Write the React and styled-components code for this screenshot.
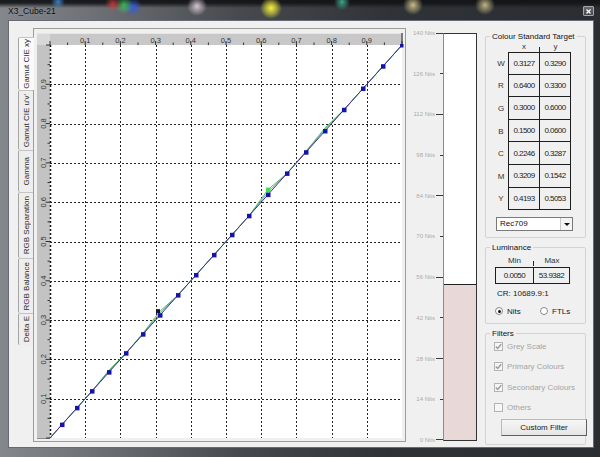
import React from 'react';
import styled, { createGlobalStyle } from 'styled-components';

const GlobalStyle = createGlobalStyle`
  html, body { margin: 0; padding: 0; background: #16181b; }
  body { font-family: "Liberation Sans", Arial, sans-serif; }
  * { box-sizing: border-box; }
`;

const Window = styled.div`
  width: 600px;
  height: 457px;
  display: flex;
  flex-direction: column;
  overflow: hidden;
  background:
    radial-gradient(circle at 58px 2px, rgba(70,150,230,0.8) 0, rgba(70,150,230,0) 7px),
    radial-gradient(circle at 113px 4px, rgba(220,60,60,0.8) 0, rgba(220,60,60,0) 8px),
    radial-gradient(circle at 124px 5px, rgba(60,200,90,0.85) 0, rgba(60,200,90,0) 9px),
    radial-gradient(circle at 133px 7px, rgba(50,90,230,0.9) 0, rgba(50,90,230,0) 9px),
    radial-gradient(circle at 197px 6px, rgba(240,220,235,0.85) 0, rgba(240,220,235,0) 10px),
    radial-gradient(circle at 271px 8px, rgba(245,240,60,1) 0, rgba(245,240,60,0.6) 5px, rgba(245,240,60,0) 11px),
    radial-gradient(circle at 342px 2px, rgba(70,200,170,0.8) 0, rgba(70,200,170,0) 8px),
    radial-gradient(circle at 413px 5px, rgba(230,215,150,0.85) 0, rgba(230,215,150,0) 10px),
    radial-gradient(circle at 485px 5px, rgba(230,215,150,0.8) 0, rgba(230,215,150,0) 10px),
    linear-gradient(to bottom, rgba(18,20,23,0.95) 0, rgba(18,20,23,0.9) 3px, rgba(18,20,23,0) 8px),
    linear-gradient(to right, #84878c 0, #6e7176 15%, #46494d 40%, #2f3236 65%, #2a2d31 100%);
`;

const TitleBar = styled.div`
  height: 20px;
  flex: none;
  display: flex;
  align-items: center;
  justify-content: space-between;
  padding: 2px 6px 0 8px;
`;

const Title = styled.span`
  font-size: 8.5px;
  color: #0e0e0e;
  text-shadow: 0 0 3px rgba(200, 200, 200, 0.35);
`;

const CloseBox = styled.div`
  width: 11px;
  height: 10px;
  display: flex;
  align-items: center;
  justify-content: center;
  border: 1px solid #a3a8ad;
  border-radius: 1px;
  background: linear-gradient(#666b70, #44484c);
`;

const Client = styled.div`
  flex: 1;
  margin: 0 6px 9px 8px;
  display: flex;
  align-items: flex-start;
  padding: 7px 0 0 9px;
  background: #f0f0f0;
  border: 1px solid #666b71;
`;

const TabControl = styled.div`
  width: 388px;
  height: 414px;
  display: flex;
  flex: none;
`;

const TabStrip = styled.div`
  width: 15px;
  display: flex;
  flex-direction: column;
  padding-top: 9px;
`;

const Tab = styled.div`
  width: ${p => (p.$active ? 16 : 15)}px;
  height: ${p => p.$len}px;
  margin-right: ${p => (p.$active ? -1 : 0)}px;
  position: relative;
  z-index: ${p => (p.$active ? 1 : 0)};
  display: flex;
  align-items: center;
  justify-content: center;
  background: ${p => (p.$active ? '#fafafa' : '#eeeeee')};
  border-left: 1px solid #a4a4a4;
  border-top: 1px solid #c4c4c4;
  border-top-left-radius: 2px;
  border-bottom-left-radius: 2px;
`;

const TabLabel = styled.span`
  writing-mode: vertical-rl;
  transform: rotate(180deg);
  white-space: nowrap;
  font-size: 8px;
  color: #2a2a2a;
`;

const Panel = styled.div`
  flex: 1;
  padding: 4px 0 0 3px;
  background: #f0f0f0;
  border: 1px solid #9c9c9c;
`;

const ChartSvg = styled.svg`
  display: block;
  font-family: "Liberation Sans", Arial, sans-serif;
`;

const NitsArea = styled.div`
  width: 74px;
  flex: none;
  display: flex;
  align-items: flex-start;
`;

const Scale = styled.div`
  width: 37px;
  height: 415px;
  margin-top: 1px;
  display: flex;
  flex-direction: column;
  justify-content: space-between;
  align-items: flex-end;
`;

const ScaleLabel = styled.div`
  height: 8px;
  display: flex;
  align-items: center;
  font-size: 6px;
  color: #ababab;
  white-space: nowrap;
`;

const TickSlot = styled.div`
  width: 8px;
  display: flex;
  justify-content: flex-end;
`;

const Tick = styled.div`
  width: ${p => (p.$long ? 7 : 3)}px;
  height: 1px;
  background: #3a3a3a;
`;

const Bar = styled.div`
  width: 34px;
  height: 408px;
  margin-top: 5px;
  display: flex;
  flex-direction: column;
  justify-content: flex-end;
  background: #ffffff;
  border: 1px solid #333333;
  border-left-color: #8c8c8c;
`;

const BarFill = styled.div`
  background: #e8d8d8;
  border-top: 1px solid #222222;
`;

const RightPanel = styled.div`
  width: 101px;
  flex: none;
  margin-left: 5px;
  display: flex;
  flex-direction: column;
`;

const GroupBox = styled.div`
  position: relative;
  height: ${p => p.$h}px;
  margin-top: ${p => p.$mt}px;
  padding: ${p => p.$pad};
  border: 1px solid #d3d3d3;
  border-radius: 2px;
`;

const GroupTitle = styled.span`
  position: absolute;
  top: -5px;
  left: 4px;
  padding: 0 2px;
  line-height: 9px;
  font-size: 8px;
  color: #111111;
  background: #f0f0f0;
`;

const StdGrid = styled.div`
  display: grid;
  grid-template-columns: 14px 32px 31px;
`;

const HeadCell = styled.div`
  position: relative;
  height: 10px;
  line-height: 9px;
  text-align: center;
  font-size: 8px;
  color: #333333;
  &::after {
    content: '';
    display: ${p => (p.$divider ? 'block' : 'none')};
    position: absolute;
    right: 0;
    bottom: 0;
    width: 1px;
    height: 5px;
    background: #222222;
  }
`;

const RowLabel = styled.div`
  height: 22.6px;
  display: flex;
  align-items: center;
  justify-content: center;
  font-size: 8px;
  color: #333333;
`;

const ValueCell = styled.div`
  height: 22.6px;
  display: flex;
  align-items: center;
  justify-content: center;
  font-size: 8px;
  letter-spacing: -0.55px;
  color: #222222;
  border-right: 1px solid #1e1e1e;
  border-bottom: 1px solid #1e1e1e;
  border-top: ${p => (p.$top ? '1px solid #1e1e1e' : 'none')};
  border-left: ${p => (p.$left ? '1px solid #1e1e1e' : 'none')};
`;

const Select = styled.div`
  width: 77px;
  height: 14px;
  margin: 7px 0 0 2px;
  display: flex;
  align-items: stretch;
  background: #ffffff;
  border: 1px solid #7a7a7a;
`;

const SelectText = styled.span`
  flex: 1;
  padding-left: 3px;
  font-size: 8px;
  line-height: 12px;
  color: #111111;
`;

const SelectButton = styled.div`
  width: 12px;
  display: flex;
  align-items: center;
  justify-content: center;
  background: #f4f4f4;
  border-left: 1px solid #c8c8c8;
  &::before {
    content: '';
    border-left: 3px solid transparent;
    border-right: 3px solid transparent;
    border-top: 3px solid #111111;
  }
`;

const LumHead = styled.div`
  display: grid;
  grid-template-columns: 39px 36px;
  height: 11px;
`;

const LumBox = styled.div`
  display: grid;
  grid-template-columns: 38px 35px;
  width: 75px;
  height: 17px;
  border: 1px solid #1e1e1e;
`;

const LumCell = styled.div`
  display: flex;
  align-items: center;
  justify-content: center;
  font-size: 8px;
  letter-spacing: -0.5px;
  color: #222222;
  border-right: ${p => (p.$divider ? '1px solid #1e1e1e' : 'none')};
`;

const InfoLine = styled.div`
  height: 10px;
  margin: 5px 0 0 2px;
  line-height: 10px;
  font-size: 8px;
  color: #1a1a1a;
`;

const RadioRow = styled.div`
  display: grid;
  grid-template-columns: 45px 1fr;
  height: 10px;
  margin-top: 7px;
`;

const RadioItem = styled.div`
  display: flex;
  align-items: center;
  gap: 4px;
  font-size: 8px;
  color: #1a1a1a;
`;

const RadioDot = styled.span`
  width: 8px;
  height: 8px;
  border-radius: 50%;
  border: 1px solid #8a8a8a;
  background: #ffffff;
  display: flex;
  align-items: center;
  justify-content: center;
  &::after {
    content: '';
    width: 3px;
    height: 3px;
    border-radius: 50%;
    background: ${p => (p.$on ? '#111111' : 'transparent')};
  }
`;

const CheckRow = styled.div`
  height: 20.5px;
  display: flex;
  align-items: center;
  gap: 4px;
  font-size: 8px;
  color: #a4a4a4;
`;

const CheckBox = styled.span`
  width: 9px;
  height: 9px;
  display: flex;
  align-items: center;
  justify-content: center;
  border: 1px solid #b4b4b4;
  background: #f6f6f6;
`;

const Button = styled.div`
  width: 86px;
  height: 17px;
  margin: 1px 0 0 7px;
  display: flex;
  align-items: center;
  justify-content: center;
  font-size: 8px;
  color: #1a1a1a;
  background: linear-gradient(#f6f6f6, #e6e6e6);
  border: 1px solid #b9b9b9;
  border-right-color: #5e5e5e;
  border-bottom-color: #5e5e5e;
`;

const tabs = [
  { label: 'Gamut CIE xy', len: 53, active: true },
  { label: "Gamut CIE u'v'", len: 60 },
  { label: 'Gamma', len: 42 },
  { label: 'RGB Separation', len: 66 },
  { label: 'RGB Balance', len: 55 },
  { label: 'Delta E', len: 32 },
];

const targets = [
  ['W', '0.3127', '0.3290'],
  ['R', '0.6400', '0.3300'],
  ['G', '0.3000', '0.6000'],
  ['B', '0.1500', '0.0600'],
  ['C', '0.2246', '0.3287'],
  ['M', '0.3209', '0.1542'],
  ['Y', '0.4193', '0.5053'],
];

const filters = [
  { label: 'Grey Scale', on: true },
  { label: 'Primary Colours', on: true },
  { label: 'Secondary Colours', on: true },
  { label: 'Others', on: false },
];

const nits = [140, 126, 112, 98, 84, 70, 56, 42, 28, 14, 0];
const maxNits = 140;
const measured = 53.9382;

// plot area in page pixels
const X0 = 50, X1 = 402, Y0 = 438, Y1 = 45;
const px = v => X0 + v * (X1 - X0);
const py = v => Y0 - v * (Y0 - Y1);
const onDiag = x => Y0 - ((x - X0) * (Y0 - Y1)) / (X1 - X0);

const sampleX = [62, 77, 92, 109, 126, 143, 160, 178, 196, 214, 232, 249, 268, 287, 306, 325, 344, 363, 383];
const drift = { 109: -2, 143: -1, 160: -4, 268: -5, 306: -1, 325: -3 };

function GamutChart() {
  const steps = Array.from({ length: 21 }, (_, i) => i);
  const grid = Array.from({ length: 9 }, (_, i) => (i + 1) / 10);
  const pts = sampleX.map(x => [x, onDiag(x)]);
  const green = pts.map(([x, y]) => [x, y + (drift[x] || 0)]);
  const teal = pts.map(([x, y]) => [x, y + (drift[x] || 0) * 0.5]);
  const line = arr => [[X0, Y0], ...arr, [X1, Y1]].map(p => p.join(',')).join(' ');

  return (
    <ChartSvg width="368" height="408" viewBox="37 33 368 408">
      <rect x="37" y="33" width="366" height="12" fill="#c8c8c8" />
      <rect x="37" y="45" width="13" height="393" fill="#c3c3c3" />
      <rect x="37" y="33" width="13" height="12" fill="#d8d8d8" />
      <line x1="37" y1="33.5" x2="403" y2="33.5" stroke="#e6e6e6" />
      <rect x="401" y="33" width="2" height="12" fill="#7a7a7a" />
      <line x1="37" y1="438.5" x2="50" y2="438.5" stroke="#8a8a8a" />
      <rect x="50" y="45" width="352" height="393" fill="#ffffff" />

      {steps.map(i => {
        const x = X0 + i * 17.6;
        const major = i % 2 === 0;
        return <line key={'tx' + i} x1={x} y1={major ? 41 : 42.5} x2={x} y2="45" stroke="#333" />;
      })}
      {steps.map(i => {
        const y = Y0 - i * 19.65;
        const major = i % 2 === 0;
        return <line key={'ty' + i} x1={major ? 46 : 47.5} y1={y} x2="50" y2={y} stroke="#333" />;
      })}
      {grid.map(v => (
        <text key={'lx' + v} x={px(v)} y="42.5" fontSize="7.5" fill="#333" textAnchor="middle">
          {v.toFixed(1)}
        </text>
      ))}
      {grid.map(v => (
        <text
          key={'ly' + v}
          x="0"
          y="0"
          fontSize="7.5"
          fill="#333"
          textAnchor="middle"
          transform={`translate(46 ${py(v)}) rotate(-90)`}
        >
          {v.toFixed(1)}
        </text>
      ))}

      <line x1="50.5" y1="45" x2="50.5" y2="438" stroke="#111" strokeDasharray="2 2" strokeWidth="1.5" />
      {grid.map(v => (
        <line key={'gx' + v} x1={Math.round(px(v)) + 0.5} y1="45" x2={Math.round(px(v)) + 0.5} y2="438" stroke="#222" strokeDasharray="2 2" />
      ))}
      {grid.map(v => (
        <line key={'gy' + v} x1="50" y1={Math.round(py(v)) + 0.5} x2="402" y2={Math.round(py(v)) + 0.5} stroke="#222" strokeDasharray="2 2" />
      ))}

      <polyline points={line(green)} fill="none" stroke="#52c35a" strokeWidth="1" />
      <polyline points={line(teal)} fill="none" stroke="#3a9aa8" strokeWidth="1" opacity="0.8" />
      <line x1={X0} y1={Y0} x2={X1} y2={Y1} stroke="#4a2b86" strokeWidth="1" />

      {pts.map(([x, y]) => (
        <rect key={'p' + x} x={x - 2} y={y - 2} width="4.5" height="4.5" fill="#1414a8" />
      ))}
      <rect x="266" y={onDiag(268) - 7} width="4.5" height="4.5" fill="#3ee04a" />
      <rect x="156" y={onDiag(160) - 6} width="4" height="4" fill="#101030" />
      <rect x="400" y="44" width="3.5" height="3.5" fill="#1414a8" />
    </ChartSvg>
  );
}

function CheckMark() {
  return (
    <svg width="7" height="7" viewBox="0 0 7 7">
      <polyline points="0.8,3.4 2.7,5.4 6.2,1.2" fill="none" stroke="#9a9a9a" strokeWidth="1.4" />
    </svg>
  );
}

export default function App() {
  const innerBar = 406;
  const fillHeight = Math.round((measured / maxNits) * innerBar);

  return (
    <>
      <GlobalStyle />
      <Window>
        <TitleBar>
          <Title>X3_Cube-21</Title>
          <CloseBox>
            <svg width="5" height="5" viewBox="0 0 5 5">
              <path d="M0.5 0.5 L4.5 4.5 M4.5 0.5 L0.5 4.5" stroke="#ffffff" strokeWidth="1.2" />
            </svg>
          </CloseBox>
        </TitleBar>

        <Client>
          <TabControl>
            <TabStrip>
              {tabs.map(t => (
                <Tab key={t.label} $len={t.len} $active={t.active}>
                  <TabLabel>{t.label}</TabLabel>
                </Tab>
              ))}
            </TabStrip>
            <Panel>
              <GamutChart />
            </Panel>
          </TabControl>

          <NitsArea>
            <Scale>
              {nits.map((n, i) => (
                <ScaleLabel key={n}>
                  {n} Nits
                  <TickSlot>
                    <Tick $long={i % 2 === 0} />
                  </TickSlot>
                </ScaleLabel>
              ))}
            </Scale>
            <Bar>
              <BarFill style={{ height: fillHeight }} />
            </Bar>
          </NitsArea>

          <RightPanel>
            <GroupBox $h={202} $mt={8} $pad="5px 0 0 8px">
              <GroupTitle>Colour Standard Target</GroupTitle>
              <StdGrid>
                <HeadCell />
                <HeadCell $divider>x</HeadCell>
                <HeadCell>y</HeadCell>
                {targets.map(([k, x, y], i) => (
                  <React.Fragment key={k}>
                    <RowLabel>{k}</RowLabel>
                    <ValueCell $top={i === 0} $left>{x}</ValueCell>
                    <ValueCell $top={i === 0}>{y}</ValueCell>
                  </React.Fragment>
                ))}
              </StdGrid>
              <Select>
                <SelectText>Rec709</SelectText>
                <SelectButton />
              </Select>
            </GroupBox>

            <GroupBox $h={77} $mt={9} $pad="8px 0 0 9px">
              <GroupTitle>Luminance</GroupTitle>
              <LumHead>
                <HeadCell $divider>Min</HeadCell>
                <HeadCell>Max</HeadCell>
              </LumHead>
              <LumBox>
                <LumCell $divider>0.0050</LumCell>
                <LumCell>53.9382</LumCell>
              </LumBox>
              <InfoLine>CR: 10689.9:1</InfoLine>
              <RadioRow>
                <RadioItem>
                  <RadioDot $on />
                  Nits
                </RadioItem>
                <RadioItem>
                  <RadioDot />
                  FTLs
                </RadioItem>
              </RadioRow>
            </GroupBox>

            <GroupBox $h={112} $mt={9} $pad="2px 0 0 8px">
              <GroupTitle>Filters</GroupTitle>
              {filters.map(f => (
                <CheckRow key={f.label}>
                  <CheckBox>{f.on && <CheckMark />}</CheckBox>
                  {f.label}
                </CheckRow>
              ))}
              <Button>Custom Filter</Button>
            </GroupBox>
          </RightPanel>
        </Client>
      </Window>
    </>
  );
}
